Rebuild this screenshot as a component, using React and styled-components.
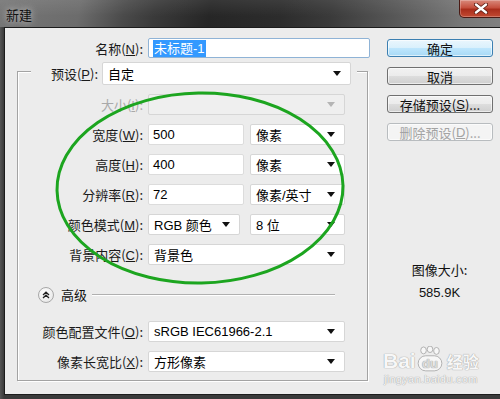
import React from "react";
import styled, { createGlobalStyle } from "styled-components";

const GlobalStyle = createGlobalStyle`
  html, body {
    margin: 0;
    padding: 0;
    background: #2a2a2a;
  }
  body {
    width: 500px;
    height: 399px;
    overflow: hidden;
  }
`;

const Window = styled.div`
  position: relative;
  width: 500px;
  height: 399px;
  overflow: hidden;
  display: flex;
  flex-direction: column;
  font-family: "Liberation Sans", "Noto Sans CJK SC", sans-serif;
  font-size: 13px;
  color: #111;
  background: #353535;
`;

const TitleBar = styled.div`
  height: 27px;
  flex: none;
  display: flex;
  align-items: flex-start;
  justify-content: space-between;
  background:
    linear-gradient(180deg, rgba(255, 255, 255, 0.08), rgba(0, 0, 0, 0) 60%),
    linear-gradient(
      100deg,
      #767676 0%,
      #6c6c6c 16%,
      #4a4a4a 25%,
      #3a3a3a 31%,
      #262626 42%,
      #2c2c2c 56%,
      #3a3a3a 66%,
      #5a5a5a 80%,
      #777 92%,
      #808080 100%
    );
`;

const Title = styled.span`
  margin: 5px 0 0 6px;
  font-family: "Noto Sans CJK SC", sans-serif;
  font-size: 13px;
  color: #111;
  text-shadow: 0 0 6px #bbb, 0 0 10px #aaa;
`;

const CloseButton = styled.div`
  width: 41px;
  height: 17px;
  margin-right: -2px;
  display: flex;
  align-items: center;
  justify-content: center;
  border: 1px solid #4a1a14;
  border-top: none;
  border-radius: 0 0 0 5px;
  background: linear-gradient(180deg, #d98a7c 0%, #c5503e 45%, #a92d1b 55%, #c24a32 100%);
  box-shadow: inset 0 0 0 1px rgba(255, 255, 255, 0.25);
`;

const Frame = styled.div`
  flex: 1;
  display: flex;
  padding: 0 0 4px 4px;
  background: linear-gradient(90deg, #555 0px, #3a3a3a 4px);
`;

const Body = styled.div`
  flex: 1;
  display: grid;
  grid-template-columns: 373px 1fr;
  background: #ececec;
  border-top: 1px solid #1c1c1c;
  border-left: 1px solid #1c1c1c;
  border-bottom: 1px solid #1c1c1c;
`;

const LeftColumn = styled.div`
  padding: 10px 0 0 12px;
  display: flex;
  flex-direction: column;
`;

const FieldRow = styled.div`
  display: grid;
  grid-template-columns: ${(p) => p.$label}px ${(p) => p.$field}px;
  column-gap: ${(p) => p.$gap || 5}px;
  align-items: center;
  height: ${(p) => p.$h || 21}px;
  margin-top: ${(p) => p.$top || 0}px;
`;

const Label = styled.label`
  text-align: right;
  white-space: nowrap;
  color: ${(p) => (p.$disabled ? "#a9a9a9" : "#1a1a1a")};
  font-family: "Noto Sans CJK SC", sans-serif;
  font-size: 13px;
  u {
    font-family: "Liberation Sans", sans-serif;
  }
`;

const TextBox = styled.div`
  height: 100%;
  box-sizing: border-box;
  display: flex;
  align-items: center;
  padding-left: 4px;
  background: #fff;
  border: 1px solid ${(p) => (p.$focus ? "#8fb3d6" : "#dcdcdc")};
  border-radius: 2px;
  font-size: 13px;
  color: #000;
`;

const Selected = styled.span`
  background: #3399ff;
  color: #fff;
  padding: 0 1px;
  line-height: 17px;
`;

const SelectBox = styled.div`
  height: 100%;
  box-sizing: border-box;
  display: flex;
  align-items: center;
  justify-content: space-between;
  padding: 0 9px 0 5px;
  background: ${(p) => (p.$disabled ? "#efefef" : "#fff")};
  border: 1px solid #d6d6d6;
  border-radius: 2px;
  font-size: 13px;
  color: #000;
`;

const Arrow = styled.span`
  width: 0;
  height: 0;
  border-left: 4px solid transparent;
  border-right: 4px solid transparent;
  border-top: 5px solid ${(p) => (p.$disabled ? "#b5b5b5" : "#111")};
`;

const Pair = styled.div`
  display: grid;
  grid-template-columns: ${(p) => p.$first}px 1fr;
  column-gap: ${(p) => p.$gap}px;
  height: 100%;
`;

const GroupBox = styled.div`
  margin-top: 13px;
  width: 351px;
  height: 310px;
  box-sizing: border-box;
  border: 1px solid #a3a3a3;
  box-shadow: inset 1px 1px 0 #fff, 1px 1px 0 #fff;
  display: flex;
  flex-direction: column;
`;

const PresetRow = styled(FieldRow)`
  margin: -10px 0 0 13px;
  padding-right: 6px;
  background: #ececec;
  width: max-content;
`;

const AdvancedRow = styled.div`
  display: flex;
  align-items: center;
  height: 15px;
  margin: 22px 32px 0 20px;
  gap: 7px;
  font-family: "Noto Sans CJK SC", sans-serif;
`;

const AdvancedIcon = styled.span`
  width: 14px;
  height: 14px;
  border-radius: 50%;
  border: 1px solid #a8a8a8;
  background: radial-gradient(circle at 40% 35%, #fff, #e2e2e2);
  display: flex;
  align-items: center;
  justify-content: center;
`;

const Rule = styled.span`
  flex: 1;
  height: 1px;
  margin-left: -2px;
  background: #b0b0b0;
  box-shadow: 0 1px 0 #fff;
`;

const RightColumn = styled.div`
  padding: 11px 0 0 9px;
  display: flex;
  flex-direction: column;
  gap: 10px;
`;

const Button = styled.div`
  width: 106px;
  height: 18px;
  box-sizing: border-box;
  display: flex;
  align-items: center;
  justify-content: center;
  border-radius: 3px;
  font-family: "Noto Sans CJK SC", sans-serif;
  font-size: 13px;
  border: 1px solid ${(p) => (p.$primary ? "#3c7fb1" : p.$disabled ? "#b8bcbf" : "#707070")};
  color: ${(p) => (p.$disabled ? "#a3a3a3" : "#111")};
  background: ${(p) =>
    p.$primary
      ? "linear-gradient(180deg, #eaf6fd 0%, #d9f0fc 50%, #bee6fd 51%, #a7d9f5 100%)"
      : p.$disabled
      ? "#f4f4f4"
      : "linear-gradient(180deg, #f2f2f2 0%, #ebebeb 50%, #dddddd 51%, #cfcfcf 100%)"};
  box-shadow: inset 0 0 0 1px rgba(255, 255, 255, 0.6);
  u {
    font-family: "Liberation Sans", sans-serif;
  }
`;

const ImageSize = styled.div`
  margin-top: 108px;
  text-align: center;
  padding-right: 8px;
  font-family: "Noto Sans CJK SC", sans-serif;
  font-size: 13px;
  color: #111;
  line-height: 22px;
`;

const SizeValue = styled.span`
  font-family: "Liberation Sans", sans-serif;
`;

const Watermark = styled.div`
  position: absolute;
  left: 383px;
  top: 346px;
  display: flex;
  flex-direction: column;
  align-items: center;
  color: #f7f7f7;
  text-shadow: 0 0 1px #9a9a9a, 0 0 1px #b0b0b0;
  pointer-events: none;
`;

const MarkTop = styled.div`
  display: flex;
  align-items: flex-end;
  font-family: "Liberation Sans", sans-serif;
  font-weight: bold;
  font-size: 21px;
  line-height: 22px;
`;

const MarkCn = styled.span`
  font-family: "Noto Sans CJK SC", sans-serif;
  font-size: 16px;
  margin-left: 3px;
`;

const MarkUrl = styled.div`
  font-family: "Liberation Sans", sans-serif;
  font-size: 11px;
  letter-spacing: 0.3px;
  margin-top: 1px;
`;

const Overlay = styled.svg`
  position: absolute;
  left: 0;
  top: 0;
  pointer-events: none;
`;

const Select = ({ children, disabled }) => (
  <SelectBox $disabled={disabled}>
    <span>{children}</span>
    <Arrow $disabled={disabled} />
  </SelectBox>
);

const Lbl = ({ text, k, disabled }) => (
  <Label $disabled={disabled}>
    {text}(<u>{k}</u>):
  </Label>
);

export default function App() {
  return (
    <>
      <GlobalStyle />
      <Window>
        <TitleBar>
          <Title>新建</Title>
          <CloseButton>
            <svg width="14" height="11" viewBox="0 0 14 11">
              <path d="M2 1.5 L12 9.5 M12 1.5 L2 9.5" stroke="#5a1a10" strokeWidth="4" strokeLinecap="round" />
              <path d="M2 1.5 L12 9.5 M12 1.5 L2 9.5" stroke="#fff" strokeWidth="2.4" strokeLinecap="round" />
            </svg>
          </CloseButton>
        </TitleBar>
        <Frame>
          <Body>
            <LeftColumn>
              <FieldRow $label={126} $field={222} $h={20}>
                <Lbl text="名称" k="N" />
                <TextBox $focus>
                  <Selected>未标题-1</Selected>
                </TextBox>
              </FieldRow>
              <GroupBox>
                <PresetRow $label={67} $field={249} $gap={4} $h={23}>
                  <Lbl text="预设" k="P" />
                  <Select>自定</Select>
                </PresetRow>
                <FieldRow $label={125} $field={197} $top={9}>
                  <Lbl text="大小" k="I" disabled />
                  <Select disabled> </Select>
                </FieldRow>
                <FieldRow $label={125} $field={197} $top={9}>
                  <Lbl text="宽度" k="W" />
                  <Pair $first={96} $gap={6}>
                    <TextBox>500</TextBox>
                    <Select>像素</Select>
                  </Pair>
                </FieldRow>
                <FieldRow $label={125} $field={197} $top={9}>
                  <Lbl text="高度" k="H" />
                  <Pair $first={96} $gap={6}>
                    <TextBox>400</TextBox>
                    <Select>像素</Select>
                  </Pair>
                </FieldRow>
                <FieldRow $label={125} $field={197} $top={9}>
                  <Lbl text="分辨率" k="R" />
                  <Pair $first={96} $gap={6}>
                    <TextBox>72</TextBox>
                    <Select>像素/英寸</Select>
                  </Pair>
                </FieldRow>
                <FieldRow $label={125} $field={197} $top={9}>
                  <Lbl text="颜色模式" k="M" />
                  <Pair $first={92} $gap={10}>
                    <Select>RGB 颜色</Select>
                    <Select>8 位</Select>
                  </Pair>
                </FieldRow>
                <FieldRow $label={125} $field={197} $top={9}>
                  <Lbl text="背景内容" k="C" />
                  <Select>背景色</Select>
                </FieldRow>
                <AdvancedRow>
                  <AdvancedIcon>
                    <svg width="8" height="8" viewBox="0 0 8 8">
                      <path d="M1 4 L4 1.2 L7 4 M1 7 L4 4.2 L7 7" fill="none" stroke="#222" strokeWidth="1.3" />
                    </svg>
                  </AdvancedIcon>
                  <span>高级</span>
                  <Rule />
                </AdvancedRow>
                <FieldRow $label={125} $field={197} $top={19}>
                  <Lbl text="颜色配置文件" k="O" />
                  <Select>sRGB IEC61966-2.1</Select>
                </FieldRow>
                <FieldRow $label={125} $field={197} $top={9}>
                  <Lbl text="像素长宽比" k="X" />
                  <Select>方形像素</Select>
                </FieldRow>
              </GroupBox>
            </LeftColumn>
            <RightColumn>
              <Button $primary>确定</Button>
              <Button>取消</Button>
              <Button>
                存储预设(<u>S</u>)...
              </Button>
              <Button $disabled>
                删除预设(<u>D</u>)...
              </Button>
              <ImageSize>
                图像大小:
                <br />
                <SizeValue>585.9K</SizeValue>
              </ImageSize>
            </RightColumn>
          </Body>
        </Frame>
        <Watermark>
          <MarkTop>
            Bai
            <svg width="28" height="26" viewBox="0 0 26 24">
              <ellipse cx="7" cy="4" rx="2.6" ry="3.2" fill="#f7f7f7" stroke="#a8a8a8" strokeWidth="0.8" />
              <ellipse cx="13" cy="3" rx="2.6" ry="3" fill="#f7f7f7" stroke="#a8a8a8" strokeWidth="0.8" />
              <ellipse cx="19" cy="4.5" rx="2.6" ry="3.2" fill="#f7f7f7" stroke="#a8a8a8" strokeWidth="0.8" />
              <rect x="2" y="9" width="22" height="14" rx="7" fill="#f7f7f7" stroke="#a8a8a8" strokeWidth="0.8" />
              <text x="13" y="20" textAnchor="middle" fontSize="12" fontWeight="bold" fill="#dcdcdc" fontFamily="Liberation Sans, sans-serif">du</text>
            </svg>
            <MarkCn>经验</MarkCn>
          </MarkTop>
          <MarkUrl>jingyan.baidu.com</MarkUrl>
        </Watermark>
        <Overlay width="500" height="399" viewBox="0 0 500 399">
          <ellipse cx="200" cy="188" rx="143" ry="95" fill="none" stroke="#1ca51f" strokeWidth="3" transform="rotate(-1 200 188)" />
        </Overlay>
      </Window>
    </>
  );
}
